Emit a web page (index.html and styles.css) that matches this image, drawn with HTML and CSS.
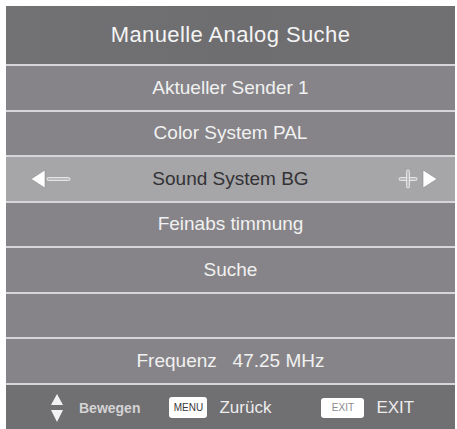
FILE: index.html
```html
<!DOCTYPE html>
<html lang="de">
<head>
<meta charset="utf-8">
<title>Manuelle Analog Suche</title>
<link rel="stylesheet" href="styles.css">
</head>
<body>
<div class="panel">
  <div class="title">Manuelle Analog Suche</div>
  <div class="row">Aktueller Sender 1</div>
  <div class="row">Color System PAL</div>
  <div class="row selected">
    <span class="adj adj-left">
      <svg width="42" height="22" viewBox="0 0 42 22">
        <polygon points="1,11 15,2 15,20" fill="#ffffff" stroke="#8a898c" stroke-width="0.6"/>
        <rect x="17" y="9.5" width="23" height="3" rx="1.5" fill="#bdbcbf" stroke="#f2f2f2" stroke-width="0.8"/>
      </svg>
    </span>
    <span class="label">Sound System BG</span>
    <span class="adj adj-right">
      <svg width="42" height="22" viewBox="0 0 42 22">
        <rect x="2" y="9.5" width="18" height="3" rx="1.5" fill="#bdbcbf" stroke="#f0f0f0" stroke-width="0.8"/>
        <rect x="9.5" y="2" width="3" height="18" rx="1.5" fill="#bdbcbf" stroke="#f0f0f0" stroke-width="0.8"/>
        <polygon points="40,11 26,2 26,20" fill="#ffffff" stroke="#8a898c" stroke-width="0.6"/>
      </svg>
    </span>
  </div>
  <div class="row">Feinabs timmung</div>
  <div class="row">Suche</div>
  <div class="row"></div>
  <div class="row freq">Frequenz   47.25 MHz</div>
  <div class="footer">
    <svg class="updown" width="12" height="30" viewBox="0 0 12 30">
      <polygon points="0,12 6,1 12,12" fill="#f2f2f2"/>
      <polygon points="0,17 12,17 6,29" fill="#f2f2f2"/>
    </svg>
    <span class="hint small">Bewegen</span>
    <span class="key key-menu">MENU</span>
    <span class="hint">Zurück</span>
    <span class="key key-exit">EXIT</span>
    <span class="hint">EXIT</span>
  </div>
</div>
</body>
</html>
```

FILE: styles.css
```css
html, body {
  margin: 0;
  padding: 0;
  background: #ffffff;
}
body {
  width: 457px;
  height: 429px;
  overflow: hidden;
  font-family: "Liberation Sans", Arial, sans-serif;
}
.panel {
  margin: 6px 0 0 6px;
  width: 449px;
  height: 423px;
  display: flex;
  flex-direction: column;
  gap: 2px;
  background: #d6d5d7;
}
.title {
  height: 58px;
  flex: none;
  display: flex;
  align-items: center;
  justify-content: center;
  background: linear-gradient(90deg, #727174, #6e6d70 50%, #706f72);
  color: #f4f4f4;
  font-size: 22px;
  letter-spacing: 0.4px;
}
.row {
  height: 43.5px;
  flex: none;
  display: flex;
  align-items: center;
  justify-content: center;
  background: #868488;
  color: #f1f1f1;
  font-size: 19px;
}
.freq {
  white-space: pre;
}
.selected {
  background: #a6a5a8;
  color: #333235;
  position: relative;
}
.adj {
  position: absolute;
  top: 50%;
  transform: translateY(-50%);
  display: flex;
}
.adj-left {
  left: 24px;
}
.adj-right {
  right: 16px;
}
.footer {
  flex: 1;
  display: flex;
  align-items: center;
  background: #706f72;
  color: #ececec;
  font-size: 17px;
  padding-left: 45px;
  padding-top: 2px;
}
.updown {
  flex: none;
}
.hint {
  margin-left: 12px;
}
.hint.small {
  margin-left: 16px;
  font-size: 14px;
  font-weight: bold;
  color: #d4d4d4;
}
.key {
  background: #ffffff;
  color: #3a393c;
  border-radius: 3px;
  font-size: 10px;
  height: 21px;
  display: flex;
  align-items: center;
  justify-content: center;
}
.key-menu {
  width: 38px;
  margin-left: 29px;
}
.key-exit {
  width: 43px;
  margin-left: 50px;
  height: 20px;
  color: #8a898c;
}
```
